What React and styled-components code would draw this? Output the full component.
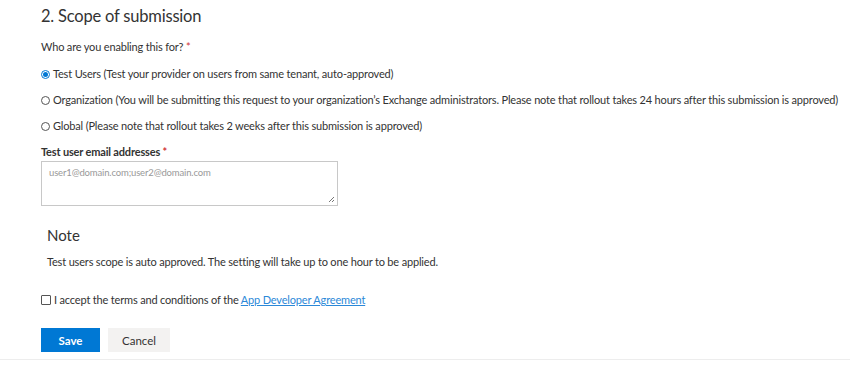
import React from "react";
import styled, { createGlobalStyle } from "styled-components";

const Global = createGlobalStyle`
  html, body { margin: 0; padding: 0; background: #fff; }
  body { font-family: Lato, "Noto Sans", Arial, sans-serif; color: #333; }
`;

const Page = styled.div`
  width: 850px;
  height: 360px;
  box-sizing: border-box;
  border-bottom: 1px solid #ededed;
  padding: 4px 0 0 41px;
`;

const Heading = styled.h2`
  margin: 0;
  font-size: 16.5px;
  letter-spacing: -0.2px;
  font-weight: 400;
  line-height: 24px;
  color: #333;
`;

const Body = styled.div`
  font-size: 11px;
  letter-spacing: -0.17px;
  line-height: 16px;
`;

const Question = styled(Body)`
  margin-top: 11px;
`;

const Req = styled.span`
  color: #d13438;
`;

const RadioList = styled.div`
  display: flex;
  flex-direction: column;
  gap: 10px;
  margin-top: 11px;
`;

const RadioRow = styled.label`
  display: flex;
  align-items: center;
  gap: 3px;
  font-size: 11px;
  letter-spacing: -0.17px;
  line-height: 16px;
  white-space: nowrap;
`;

const RadioDot = styled.span`
  width: 9px;
  height: 9px;
  box-sizing: border-box;
  border-radius: 50%;
  border: 1px solid ${(p) => (p.$checked ? "#0078d4" : "#555")};
  display: inline-flex;
  align-items: center;
  justify-content: center;
  flex: none;
  &::after {
    content: "";
    width: 5px;
    height: 5px;
    border-radius: 50%;
    background: ${(p) => (p.$checked ? "#0078d4" : "transparent")};
  }
`;

const FieldLabel = styled(Body)`
  margin-top: 10px;
  font-weight: 700;
`;

const TextArea = styled.div`
  position: relative;
  margin-top: 1px;
  width: 297px;
  height: 45px;
  box-sizing: border-box;
  border: 1px solid #c8c8c8;
  padding: 4px 7px;
  font-size: 9.5px;
  letter-spacing: -0.15px;
  line-height: 14px;
  color: #999;
`;

const Grip = styled.svg`
  position: absolute;
  right: 2px;
  bottom: 2px;
`;

const NoteTitle = styled.div`
  margin: 19px 0 0 6px;
  font-size: 15px;
  line-height: 20px;
  color: #333;
`;

const NoteText = styled(Body)`
  margin: 9px 0 0 6px;
`;

const CheckRow = styled.label`
  display: flex;
  align-items: center;
  gap: 3px;
  margin-top: 22px;
  font-size: 11px;
  letter-spacing: -0.17px;
  line-height: 16px;
`;

const Box = styled.span`
  width: 8px;
  height: 8px;
  border: 1px solid #555;
  border-radius: 1px;
  flex: none;
`;

const Link = styled.a`
  color: #2b88d8;
  text-decoration: underline;
`;

const Buttons = styled.div`
  display: flex;
  gap: 8px;
  margin-top: 20px;
`;

const Button = styled.button`
  height: 24px;
  min-width: ${(p) => p.$w}px;
  border: none;
  font-family: inherit;
  font-size: 11.5px;
  font-weight: ${(p) => (p.$primary ? 700 : 400)};
  background: ${(p) => (p.$primary ? "#0078d4" : "#f3f2f1")};
  color: ${(p) => (p.$primary ? "#fff" : "#333")};
  padding: 0;
`;

export default function App() {
  return (
    <>
      <Global />
      <Page>
        <Heading>2. Scope of submission</Heading>
        <Question>
          Who are you enabling this for? <Req>*</Req>
        </Question>
        <RadioList>
          <RadioRow>
            <RadioDot $checked />
            Test Users (Test your provider on users from same tenant, auto-approved)
          </RadioRow>
          <RadioRow>
            <RadioDot />
            Organization (You will be submitting this request to your organization’s Exchange administrators. Please note that rollout takes 24 hours after this submission is approved)
          </RadioRow>
          <RadioRow>
            <RadioDot />
            Global (Please note that rollout takes 2 weeks after this submission is approved)
          </RadioRow>
        </RadioList>
        <FieldLabel>
          Test user email addresses <Req>*</Req>
        </FieldLabel>
        <TextArea>
          user1@domain.com;user2@domain.com
          <Grip width="7" height="7" viewBox="0 0 7 7">
            <path d="M6 1 L1 6 M6 4 L4 6" stroke="#777" strokeWidth="1" />
          </Grip>
        </TextArea>
        <NoteTitle>Note</NoteTitle>
        <NoteText>Test users scope is auto approved. The setting will take up to one hour to be applied.</NoteText>
        <CheckRow>
          <Box />
          <span>
            I accept the terms and conditions of the <Link href="#">App Developer Agreement</Link>
          </span>
        </CheckRow>
        <Buttons>
          <Button $primary $w={59}>Save</Button>
          <Button $w={62}>Cancel</Button>
        </Buttons>
      </Page>
    </>
  );
}
